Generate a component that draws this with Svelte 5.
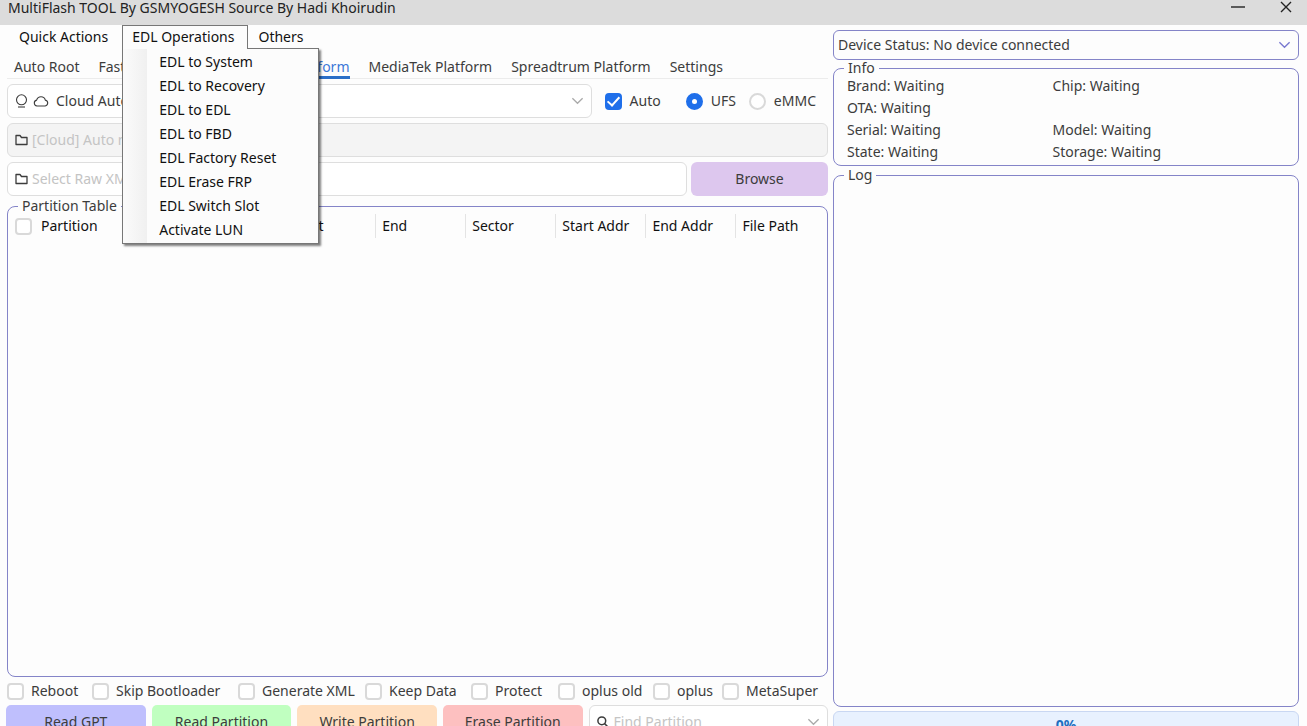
<script lang="ts">
	const edlItems = [
		'EDL to System',
		'EDL to Recovery',
		'EDL to EDL',
		'EDL to FBD',
		'EDL Factory Reset',
		'EDL Erase FRP',
		'EDL Switch Slot',
		'Activate LUN'
	];

	const tabs = ['Auto Root', 'Fastboot Mode', 'Qualcomm Platform', 'MediaTek Platform', 'Spreadtrum Platform', 'Settings'];

	const columns = ['LUN', 'Start', 'End', 'Sector', 'Start Addr', 'End Addr', 'File Path'];

	const options = ['Reboot', 'Skip Bootloader', 'Generate XML', 'Keep Data', 'Protect', 'oplus old', 'oplus', 'MetaSuper'];

	const actions = [
		{ label: 'Read GPT', kind: 'gpt' },
		{ label: 'Read Partition', kind: 'read' },
		{ label: 'Write Partition', kind: 'write' },
		{ label: 'Erase Partition', kind: 'erase' }
	];

	let menuOpen = $state(true);
	let activeTab = $state('Qualcomm Platform');
	let auto = $state(true);
	let storage = $state('UFS');
	let progress = $state(0);
</script>

{#snippet chevron()}
	<svg class="chevron" viewBox="0 0 14 8" fill="none" stroke="currentColor" stroke-width="1.4">
		<path d="M1.5 1l5.5 5.5L12.500 1" />
	</svg>
{/snippet}

{#snippet folder()}
	<svg class="folder" viewBox="0 0 13 12" fill="none" stroke="currentColor" stroke-width="1.3" stroke-linejoin="round">
		<path d="M1 1.500h4l1.500 2H12v7H1z" />
	</svg>
{/snippet}

<div class="window">
	<header class="titlebar">
		<h1>MultiFlash TOOL By GSMYOGESH Source By Hadi Khoirudin</h1>
		<button type="button" aria-label="Minimize">
			<svg viewBox="0 0 14 14" fill="none" stroke="currentColor" stroke-width="1.4"><path d="M0 7h14" /></svg>
		</button>
		<button type="button" aria-label="Close">
			<svg viewBox="0 0 14 14" fill="none" stroke="currentColor" stroke-width="1.4"><path d="M2 2l10 10M12 2L2 12" /></svg>
		</button>
	</header>

	<main>
		<section class="left">
			<nav class="menubar">
				<button type="button">Quick Actions</button>
				<div class="menu" class:open={menuOpen}>
					<button type="button" aria-expanded={menuOpen} onclick={() => (menuOpen = !menuOpen)}>EDL Operations</button>
					{#if menuOpen}
						<ul class="dropdown">
							{#each edlItems as item}
								<li><button type="button">{item}</button></li>
							{/each}
						</ul>
					{/if}
				</div>
				<button type="button">Others</button>
			</nav>

			<nav class="tabs">
				{#each tabs as tab}
					<button type="button" class:active={tab === activeTab} onclick={() => (activeTab = tab)}>{tab}</button>
				{/each}
			</nav>

			<div class="row">
				<div class="field loader">
					<svg class="bulb" viewBox="0 0 13 14" fill="none" stroke="currentColor" stroke-width="1.1">
						<circle cx="6.500" cy="5.800" r="5" />
						<path d="M3 13h7" />
					</svg>
					<svg class="cloud" viewBox="0 0 16 11" fill="none" stroke="currentColor" stroke-width="1.1">
						<path d="M4 10a3 3 0 0 1-.4-5.900C4.300 2 6 .8 8 .8c2.200 0 3.800 1.300 4.300 3.300A3 3 0 0 1 12.200 10z" />
					</svg>
					<select aria-label="Loader">
						<option>Cloud Auto Match</option>
					</select>
					{@render chevron()}
				</div>
				<label class="check"><input type="checkbox" bind:checked={auto} />Auto</label>
				<div class="radios">
					<label class="check"><input type="radio" name="storage" value="UFS" bind:group={storage} />UFS</label>
					<label class="check"><input type="radio" name="storage" value="eMMC" bind:group={storage} />eMMC</label>
				</div>
			</div>

			<div class="field disabled">
				{@render folder()}
				<input type="text" placeholder="[Cloud] Auto match loader" aria-label="Loader file" disabled />
			</div>

			<div class="row browse-row">
				<div class="field">
					{@render folder()}
					<input type="text" placeholder="Select Raw XML" aria-label="Raw XML file" />
				</div>
				<button type="button" class="browse">Browse</button>
			</div>

			<fieldset class="partitions">
				<legend>Partition Table</legend>
				<table>
					<thead>
						<tr>
							<th class="name"><label class="check"><input type="checkbox" />Partition</label></th>
							{#each columns as column}
								<th><span>{column}</span></th>
							{/each}
						</tr>
					</thead>
				</table>
			</fieldset>

			<div class="options">
				{#each options as option}
					<label class="check"><input type="checkbox" />{option}</label>
				{/each}
			</div>

			<div class="actions">
				{#each actions as action}
					<button type="button" class={action.kind}>{action.label}</button>
				{/each}
				<div class="field search">
					<svg class="lens" viewBox="0 0 12 12" fill="none" stroke="currentColor" stroke-width="1.5">
						<circle cx="4.800" cy="4.800" r="3.900" />
						<path d="M7.600 7.600l4 4" />
					</svg>
					<input type="text" placeholder="Find Partition" aria-label="Find partition" />
					{@render chevron()}
				</div>
			</div>
		</section>

		<section class="right">
			<div class="status">
				<select aria-label="Device">
					<option>Device Status: No device connected</option>
				</select>
				{@render chevron()}
			</div>

			<fieldset class="info">
				<legend>Info</legend>
				<div class="info-grid">
					<span>Brand: Waiting</span>
					<span>Chip: Waiting</span>
					<span class="wide">OTA: Waiting</span>
					<span>Serial: Waiting</span>
					<span>Model: Waiting</span>
					<span>State: Waiting</span>
					<span>Storage: Waiting</span>
				</div>
			</fieldset>

			<fieldset class="log">
				<legend>Log</legend>
			</fieldset>

			<div class="progress" role="progressbar" aria-label="Progress" aria-valuenow={progress}>{progress}%</div>
		</section>
	</main>
</div>

<style>
	:global(body) {
		overflow: hidden;
		background: #fdfdfd;
	}

	.window {
		display: flex;
		flex-direction: column;
		height: calc(100vh + 13px);
		font: 14px/20px 'Noto Sans', 'Open Sans', sans-serif;
		color: #3c3c3c;
	}

	.window * {
		box-sizing: border-box;
	}

	button,
	input,
	select {
		margin: 0;
		padding: 0;
		border: 0;
		background: none;
		font: inherit;
		color: inherit;
	}

	svg {
		flex: none;
	}

	.titlebar {
		display: flex;
		align-items: flex-start;
		height: 25px;
		padding: 0 14px 0 8px;
		background: #dcdcdc;
		color: #222;
	}

	.titlebar h1 {
		flex: 1;
		margin: 0;
		font: inherit;
		line-height: 16px;
	}

	.titlebar button {
		width: 14px;
		height: 14px;
		margin-left: 34px;
	}

	.titlebar svg {
		display: block;
		width: 14px;
		height: 14px;
	}

	main {
		flex: 1;
		display: grid;
		grid-template-columns: minmax(0, 821fr) minmax(0, 466fr);
		gap: 5px;
		min-height: 0;
		padding: 0 8px 0 7px;
	}

	.left,
	.right {
		display: flex;
		flex-direction: column;
		min-height: 0;
	}

	.left {
		gap: 5px;
	}

	.menubar {
		display: flex;
		height: 24px;
		padding-left: 2px;
		color: #111;
	}

	.menubar > button,
	.menu > button {
		height: 24px;
		padding: 0 14px 0 10px;
	}

	.menu {
		position: relative;
	}

	.menu.open > button {
		position: relative;
		z-index: 3;
		padding: 0 13px 1px 9px;
		border: 1px solid #777;
		border-bottom: 0;
		background: #fcfcfc;
	}

	.dropdown {
		position: absolute;
		z-index: 2;
		top: 23px;
		left: 0;
		width: 197px;
		margin: 0;
		padding: 1px 0;
		border: 1px solid #777;
		background: linear-gradient(90deg, #fbfbfb, #f0f0f0 24px, #fcfcfc 24px);
		box-shadow: 2px 2px 2px rgba(0, 0, 0, 0.5);
		list-style: none;
	}

	.dropdown button {
		width: 100%;
		height: 24px;
		padding-left: 36px;
		text-align: left;
	}

	.dropdown li {
		height: 24px;
	}

	.tabs {
		display: flex;
		gap: 19px;
		height: 30px;
		margin-top: -5px;
		padding-left: 7px;
		border-bottom: 1px solid #ececec;
	}

	.tabs button {
		height: 30px;
		padding-top: 8px;
		border-bottom: 3px solid transparent;
		white-space: nowrap;
	}

	.tabs .active {
		border-color: #2b6fc8;
		color: #3b78d8;
	}

	.row {
		display: flex;
		align-items: center;
	}

	.field {
		flex: 1;
		display: flex;
		align-items: center;
		height: 34px;
		min-width: 0;
		padding: 0 7px;
		border: 1px solid #dedede;
		border-radius: 6px;
		background: #fff;
	}

	.field input,
	.field select {
		flex: 1;
		min-width: 0;
		outline: none;
	}

	.field input::placeholder {
		color: #c4c4c4;
		opacity: 1;
	}

	select {
		appearance: none;
	}

	.loader {
		gap: 5px;
	}

	.loader select {
		padding-left: 2px;
	}

	.disabled {
		flex: none;
		background: #f4f4f4;
	}

	.chevron {
		width: 13px;
		height: 8px;
		color: #aaa;
	}

	.folder {
		width: 13px;
		height: 12px;
		margin-right: 4px;
	}

	.bulb {
		width: 13px;
		height: 14px;
	}

	.cloud {
		width: 16px;
		height: 11px;
	}

	.lens {
		width: 12px;
		height: 12px;
		margin-right: 5px;
	}

	.check {
		display: flex;
		align-items: center;
		gap: 7px;
		white-space: nowrap;
	}

	.row .check {
		gap: 8px;
	}

	.check input {
		appearance: none;
		flex: none;
		display: grid;
		place-items: center;
		width: 17px;
		height: 17px;
		border: 2px solid #d9d9d9;
		border-radius: 4px;
		background: #fff;
	}

	.check input[type='radio'] {
		border-radius: 50%;
	}

	.check input:checked {
		border-color: #1f6fea;
		background: #1f6fea;
	}

	.check input[type='checkbox']:checked::before {
		content: '';
		width: 5px;
		height: 10px;
		border: solid #fff;
		border-width: 0 2px 2px 0;
		transform: translateY(-1px) rotate(42deg);
	}

	.check input[type='radio']:checked::before {
		content: '';
		width: 5px;
		height: 5px;
		border-radius: 50%;
		background: #fff;
	}

	.row > .check {
		margin-left: 13px;
	}

	.radios {
		display: flex;
		gap: 13px;
		margin: 0 12px 0 25px;
	}

	.browse-row {
		gap: 4px;
	}

	.browse {
		width: 137px;
		height: 34px;
		border-radius: 6px;
		background: #ddc7ee;
	}

	fieldset {
		min-width: 0;
		margin: 0;
		padding: 0;
		border: 1px solid #8484c8;
		border-radius: 8px;
	}

	legend {
		margin-left: 10px;
		padding: 0 4px;
	}

	.partitions {
		flex: 1;
		margin-top: -5px;
	}

	table {
		width: 100%;
		margin-top: -2px;
		border-collapse: collapse;
		table-layout: fixed;
		color: #111;
	}

	th {
		width: 11%;
		height: 22px;
		padding: 0;
		font-weight: 400;
		text-align: left;
	}

	th:last-child {
		width: auto;
	}

	th span {
		display: block;
		height: 24px;
		padding-left: 6px;
		border-left: 1px solid #e4e4e4;
		line-height: 24px;
	}

	.name {
		width: 187px;
		padding-left: 7px;
	}

	.name .check {
		gap: 9px;
	}

	.options {
		display: grid;
		grid-template-columns: 85fr 146fr 127fr 106fr 87fr 95fr 69fr 106fr;
		margin-top: -1px;
	}

	.actions {
		display: grid;
		grid-template-columns: repeat(4, minmax(0, 140fr)) minmax(0, 240fr);
		gap: 6px;
		margin: -1px 0 0 -1px;
	}

	.actions button {
		height: 34px;
		border-radius: 5px;
	}

	.gpt {
		background: #bfbffd;
	}

	.read {
		background: #c0ffc0;
	}

	.write {
		background: #ffdfc0;
	}

	.erase {
		background: #fdc0c0;
	}

	.status {
		display: flex;
		align-items: center;
		height: 30px;
		margin-top: 5px;
		padding: 0 7px 0 4px;
		border: 1px solid #8484c8;
		border-radius: 6px;
	}

	.status select {
		flex: 1;
		min-width: 0;
	}

	.status .chevron {
		color: #7878d0;
	}

	.info {
		margin-top: -2px;
	}

	.info-grid {
		display: grid;
		grid-template-columns: 206fr 246fr;
		grid-auto-rows: 22px;
		padding: 0 0 2px 13px;
		margin-top: -3px;
		line-height: 22px;
	}

	.wide {
		grid-column: 1 / -1;
	}

	.log {
		flex: 1;
		margin-top: -1px;
	}

	.progress {
		height: 28px;
		margin-top: 4px;
		border: 1px solid #c9d7f2;
		border-radius: 6px;
		background: #e8f1fe;
		color: #1f6fc0;
		font-weight: 700;
		line-height: 26px;
		text-align: center;
	}
</style>
